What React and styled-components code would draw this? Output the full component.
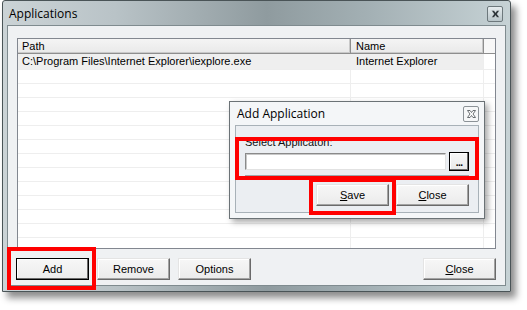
import React from "react";
import styled, { createGlobalStyle } from "styled-components";

const GlobalStyle = createGlobalStyle`
  html, body {
    margin: 0;
    background: #ffffff;
  }
  body {
    font-family: "Liberation Sans", Arial, sans-serif;
    font-size: 11px;
    color: #000;
  }
`;

const Page = styled.div`
  position: relative;
  width: 527px;
  height: 310px;
  padding-left: 2px;
  box-sizing: border-box;
  overflow: hidden;
`;

const Window = styled.div`
  position: relative;
  width: 509px;
  height: 292px;
  box-sizing: border-box;
  display: flex;
  flex-direction: column;
  padding: 0 4px 5px 4px;
  border: 1px solid #4a5457;
  border-radius: 3px 3px 0 0;
  background: linear-gradient(
    90deg,
    #cbd3d6 0%,
    #b9c3c7 22%,
    #8f9b9f 52%,
    #a3b0b4 72%,
    #c6d2d5 100%
  );
  box-shadow: 5px 6px 7px rgba(0, 0, 0, 0.45);
`;

const TitleBar = styled.div`
  height: 23px;
  display: flex;
  align-items: center;
  justify-content: space-between;
  padding: 1px 3px 0 2px;
`;

const TitleText = styled.span`
  font-family: "Open Sans", "Noto Sans", sans-serif;
  font-size: 12px;
  color: #000;
`;

const CloseBox = styled.span`
  width: 16px;
  height: 16px;
  box-sizing: border-box;
  display: flex;
  align-items: center;
  justify-content: center;
  border: 1px solid ${(p) => (p.$dialog ? "#8c9297" : "#6d787c")};
  border-radius: 2px;
  background: ${(p) =>
    p.$dialog
      ? "#f6f7f8"
      : "linear-gradient(#e6ecee, #b9c5c9)"};
`;

const Client = styled.div`
  flex: 1;
  display: flex;
  flex-direction: column;
  border: 1px solid #7f8b8f;
  background: #eff1f3;
  padding: 12px 9px 5px 9px;
  min-height: 0;
`;

const ListBox = styled.div`
  flex: 1;
  min-height: 0;
  border: 1px solid #828790;
  background: #ffffff;
  overflow: hidden;
  display: flex;
  flex-direction: column;
`;

const Columns = "333px 133px 1fr";

const HeaderRow = styled.div`
  display: grid;
  grid-template-columns: ${Columns};
  height: 14px;
  background: linear-gradient(#f4f4f4, #e9e9e9);
  border-bottom: 1px solid #8e8e8e;
  box-shadow: inset 0 -1px #c9c9c9;
`;

const HeaderCell = styled.div`
  padding-left: ${(p) => (p.$first ? "4px" : "5px")};
  line-height: 14px;
  border-right: ${(p) => (p.$filler ? "none" : "1px solid #8e8e8e")};
  box-shadow: ${(p) => (p.$filler ? "none" : "inset -1px 0 #c9c9c9")};
  background: ${(p) => (p.$filler ? "#f7f7f7" : "transparent")};
  white-space: nowrap;
`;

const Row = styled.div`
  display: grid;
  grid-template-columns: ${Columns};
  height: ${(p) => (p.$first ? "15px" : "13px")};
  flex-shrink: 0;
  border-bottom: 1px solid #eeeeee;
`;

const Cell = styled.div`
  padding-left: ${(p) => (p.$first ? "4px" : "5px")};
  line-height: ${(p) => (p.$tall ? "15px" : "13px")};
  border-right: ${(p) => (p.$filler ? "none" : "1px solid #eeeeee")};
  background: ${(p) => (p.$selected ? "#efefef" : "transparent")};
  white-space: nowrap;
  overflow: hidden;
`;

const Footer = styled.div`
  display: flex;
  gap: 8px;
  margin-top: 9px;
  margin-left: -1px;
`;

const Button = styled.button`
  width: ${(p) => p.$w || 73}px;
  height: 22px;
  box-sizing: border-box;
  padding: 0;
  font-family: "Liberation Sans", Arial, sans-serif;
  font-size: 11px;
  color: #000;
  background: linear-gradient(#f7f7f7, #ebebeb);
  border: 1px solid;
  border-color: ${(p) =>
    p.$default ? "#000" : "#e4e4e4 #6a6a6a #6a6a6a #e4e4e4"};
  box-shadow: ${(p) =>
    p.$default
      ? "inset -1px -1px #6a6a6a, inset 1px 1px #fff"
      : "inset -1px -1px #a3a3a3, inset 1px 1px #fff"};
  margin-left: ${(p) => (p.$push ? "auto" : "0")};
  u {
    text-decoration: underline;
  }
`;

const Dialog = styled.div`
  position: absolute;
  left: 226px;
  top: 100px;
  width: 256px;
  height: 118px;
  box-sizing: border-box;
  display: flex;
  flex-direction: column;
  padding: 0 5px 5px 5px;
  border: 1px solid #6b7276;
  background: #f4f6f8;
  box-shadow: 3px 3px 6px rgba(0, 0, 0, 0.35);
`;

const DialogTitle = styled.div`
  height: 23px;
  display: flex;
  align-items: center;
  justify-content: space-between;
  padding: 0 0 0 2px;
`;

const Panel = styled.div`
  flex: 1;
  display: flex;
  flex-direction: column;
  border: 1px solid #a8b1b8;
  background: #ebeef2;
  padding: 10px 9px 0 9px;
`;

const Label = styled.div`
  line-height: 13px;
  color: #111;
`;

const FieldRow = styled.div`
  display: flex;
  align-items: center;
  gap: 3px;
  margin-top: 3px;
`;

const TextInput = styled.div`
  width: 205px;
  height: 17px;
  box-sizing: border-box;
  background: #fff;
  border: 1px solid;
  border-color: #8a8a8a #e2e2e2 #e2e2e2 #8a8a8a;
  box-shadow: inset 1px 1px #c8c8c8;
`;

const BrowseButton = styled.span`
  width: 20px;
  height: 19px;
  box-sizing: border-box;
  display: flex;
  align-items: flex-end;
  justify-content: center;
  padding-bottom: 4px;
  border: 1px solid #000;
  box-shadow: inset -1px -1px #6a6a6a, inset 1px 1px #fff;
  background: linear-gradient(#f7f7f7, #e9e9e9);
  font-weight: bold;
  font-size: 10px;
  line-height: 6px;
  letter-spacing: -0.5px;
`;

const Separator = styled.div`
  height: 0;
  margin-top: 4px;
  border-top: 1px solid #9fa6ab;
  border-bottom: 1px solid #ffffff;
`;

const DialogButtons = styled.div`
  display: flex;
  justify-content: flex-end;
  gap: 7px;
  margin-top: 7px;
`;

const Highlight = styled.div`
  position: absolute;
  left: ${(p) => p.$x}px;
  top: ${(p) => p.$y}px;
  width: ${(p) => p.$w}px;
  height: ${(p) => p.$h}px;
  box-sizing: border-box;
  border: 4px solid #ff0000;
  pointer-events: none;
`;

const CloseIcon = ({ dialog }) => (
  <svg width="9" height="8" viewBox="0 0 9 8">
    <polygon
      points="0.5,0.5 3,0.5 4.5,2.5 6,0.5 8.5,0.5 6,4 8.5,7.5 6,7.5 4.5,5.5 3,7.5 0.5,7.5 3,4"
      fill={dialog ? "#ffffff" : "#2b3236"}
      stroke={dialog ? "#5a5f63" : "#e8eef0"}
      strokeWidth={dialog ? 0.9 : 0.4}
      strokeLinejoin="round"
    />
  </svg>
);

const rows = Array.from({ length: 14 }, (_, i) => i);

export default function App() {
  return (
    <>
      <GlobalStyle />
      <Page>
        <Window>
          <TitleBar>
            <TitleText>Applications</TitleText>
            <CloseBox>
              <CloseIcon />
            </CloseBox>
          </TitleBar>
          <Client>
            <ListBox>
              <HeaderRow>
                <HeaderCell $first>Path</HeaderCell>
                <HeaderCell>Name</HeaderCell>
                <HeaderCell $filler />
              </HeaderRow>
              {rows.map((i) => (
                <Row key={i} $first={i === 0}>
                  <Cell $first $tall={i === 0} $selected={i === 0}>
                    {i === 0 ? "C:\\Program Files\\Internet Explorer\\iexplore.exe" : ""}
                  </Cell>
                  <Cell $tall={i === 0} $selected={i === 0}>
                    {i === 0 ? "Internet Explorer" : ""}
                  </Cell>
                  <Cell $filler />
                </Row>
              ))}
            </ListBox>
            <Footer>
              <Button $default>Add</Button>
              <Button>Remove</Button>
              <Button>Options</Button>
              <Button $push>
                <u>C</u>lose
              </Button>
            </Footer>
          </Client>
          <Dialog>
            <DialogTitle>
              <TitleText>Add Application</TitleText>
              <CloseBox $dialog>
                <CloseIcon dialog />
              </CloseBox>
            </DialogTitle>
            <Panel>
              <Label>Select Applicaton:</Label>
              <FieldRow>
                <TextInput />
                <BrowseButton>...</BrowseButton>
              </FieldRow>
              <Separator />
              <DialogButtons>
                <Button>
                  <u>S</u>ave
                </Button>
                <Button>
                  <u>C</u>lose
                </Button>
              </DialogButtons>
            </Panel>
          </Dialog>
        </Window>
        <Highlight $x={7} $y={247} $w={89} $h={43} />
        <Highlight $x={235} $y={137} $w={244} $h={43} />
        <Highlight $x={309} $y={178} $w={87} $h={37} />
      </Page>
    </>
  );
}
